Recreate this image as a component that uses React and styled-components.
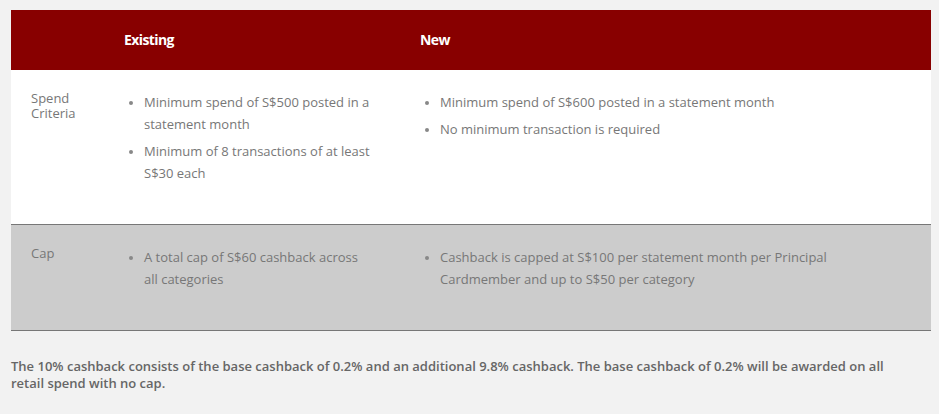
import React from "react";
import styled, { createGlobalStyle } from "styled-components";

const Global = createGlobalStyle`
  html, body { margin: 0; padding: 0; background: #f2f2f2; }
  body { font-family: "Open Sans", "Liberation Sans", sans-serif; }
`;

const Page = styled.div`
  padding: 10px 0 0 11px;
  width: 920px;
`;

const Table = styled.div`
  display: grid;
  grid-template-columns: 99px 296px 1fr;
  width: 920px;
`;

const HeadCell = styled.div`
  background: #880000;
  color: #fff;
  height: 60px;
  display: flex;
  align-items: center;
  padding-left: 14px;
  padding-bottom: 1px;
  box-sizing: border-box;
  font-size: 14px;
  font-weight: 700;
  letter-spacing: -0.6px;
`;

const Cell = styled.div`
  background: ${(p) => (p.$shade ? "#cccccc" : "#ffffff")};
  border-bottom: 1px solid #777;
  padding: 21px 34px 35px 14px;
  color: #777;
  font-size: 13px;
`;

const LabelCell = styled(Cell)`
  padding-left: 20px;
  padding-right: 20px;
  line-height: 15px;
`;

const List = styled.ul`
  margin: 0;
  padding: 0 0 0 20px;
  list-style: disc;
  line-height: 22px;
`;

const Item = styled.li`
  margin-bottom: 5px;
  &::marker { font-size: 11px; color: #888; }
`;

const Note = styled.p`
  margin: 27px 0 0;
  max-width: 905px;
  font-size: 13px;
  font-weight: 600;
  line-height: 17px;
  color: #666;
`;

const rows = [
  {
    label: "Spend Criteria",
    existing: [
      "Minimum spend of S$500 posted in a statement month",
      "Minimum of 8 transactions of at least S$30 each",
    ],
    next: [
      "Minimum spend of S$600 posted in a statement month",
      "No minimum transaction is required",
    ],
  },
  {
    label: "Cap",
    shade: true,
    existing: ["A total cap of S$60 cashback across all categories"],
    next: [
      "Cashback is capped at S$100 per statement month per Principal Cardmember and up to S$50 per category",
    ],
  },
];

export default function App() {
  return (
    <Page>
      <Global />
      <Table>
        <HeadCell />
        <HeadCell>Existing</HeadCell>
        <HeadCell>New</HeadCell>
        {rows.map((r) => (
          <React.Fragment key={r.label}>
            <LabelCell $shade={r.shade}>{r.label}</LabelCell>
            <Cell $shade={r.shade}>
              <List>
                {r.existing.map((t) => (
                  <Item key={t}>{t}</Item>
                ))}
              </List>
            </Cell>
            <Cell $shade={r.shade}>
              <List>
                {r.next.map((t) => (
                  <Item key={t}>{t}</Item>
                ))}
              </List>
            </Cell>
          </React.Fragment>
        ))}
      </Table>
      <Note>
        The 10% cashback consists of the base cashback of 0.2% and an additional 9.8% cashback. The base cashback of 0.2% will be awarded on all retail spend with no cap.
      </Note>
    </Page>
  );
}
